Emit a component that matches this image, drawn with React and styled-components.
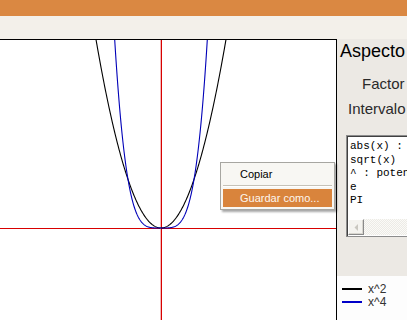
import React from 'react';
import styled, { createGlobalStyle } from 'styled-components';

const Global = createGlobalStyle`
  html, body { margin: 0; padding: 0; background: #fff; }
  body { font-family: "Liberation Sans", Arial, sans-serif; overflow: hidden; }
`;

const Window = styled.div`
  width: 407px;
  height: 320px;
  display: flex;
  flex-direction: column;
  overflow: hidden;
  position: relative;
`;
const TitleBar = styled.div`
  height: 16px;
  flex: none;
  background: #da8842;
`;
const Toolbar = styled.div`
  height: 23px;
  flex: none;
  background: #f3f0ea;
`;
const Main = styled.div`
  flex: 1;
  display: flex;
  min-height: 0;
`;
const PlotArea = styled.div`
  width: 336px;
  flex: none;
  border-top: 1px solid #000;
  border-right: 1px solid #000;
  background: #fff;
  svg { display: block; }
`;
const Side = styled.div`
  flex: 1;
  min-width: 0;
  display: flex;
  flex-direction: column;
  background: #ece9e4;
  overflow: hidden;
  white-space: nowrap;
`;
const Heading = styled.div`
  font-size: 18px;
  line-height: 22px;
  margin-top: 1px;
  padding-left: 3px;
  color: #000;
`;
const Label = styled.div`
  font-size: 15px;
  line-height: 18px;
  color: #2a2a2a;
  margin-top: ${p => p.$top}px;
  padding-left: ${p => p.$left}px;
`;
const TextBox = styled.div`
  margin-top: 17px;
  margin-left: 9px;
  width: 90px;
  height: 102px;
  flex: none;
  box-sizing: border-box;
  border: 1px solid #8c8c8c;
  box-shadow: inset 1px 1px 0 #404040;
  background: #fff;
  display: flex;
  flex-direction: column;
  overflow: hidden;
`;
const Code = styled.div`
  flex: 1;
  padding: 4px 0 0 3px;
  font-family: "Liberation Mono", "Courier New", monospace;
  font-size: 11px;
  line-height: 13.5px;
  color: #000;
`;
const HScroll = styled.div`
  height: 16px;
  margin: 0 0 1px 1px;
  display: flex;
  background-color: #f3f2ee;
  background-image: repeating-conic-gradient(#fbfaf7 0 25%, #ecebe6 0 50%);
  background-size: 2px 2px;
`;
const ArrowBtn = styled.div`
  width: 16px;
  height: 16px;
  box-sizing: border-box;
  background: #f4f3ef;
  border: 1px solid;
  border-color: #fff #8a8a8a #8a8a8a #fff;
  box-shadow: inset -1px -1px 0 #d8d6cf;
  display: flex;
  align-items: center;
  justify-content: center;
`;
const Legend = styled.div`
  flex: 1;
  margin-top: 39px;
  background: #fdfdfd;
  padding: 6px 0 0 5px;
  display: flex;
  flex-direction: column;
`;
const LegendRow = styled.div`
  height: 13px;
  display: flex;
  align-items: center;
  gap: 6px;
  font-size: 12px;
  color: #333;
`;
const Swatch = styled.span`
  width: 20px;
  height: 2px;
  background: ${p => p.$color};
`;
const Menu = styled.div`
  position: absolute;
  left: 220px;
  top: 162px;
  width: 115px;
  box-sizing: border-box;
  padding: 2px;
  background: #f8f7f3;
  border: 1px solid #a7a6a1;
  box-shadow: 2px 2px 2px rgba(0, 0, 0, 0.35);
  font-size: 11px;
`;
const MenuItem = styled.div`
  height: 18px;
  line-height: 18px;
  padding-left: 17px;
  color: ${p => (p.$active ? '#fdf6ee' : '#000')};
  background: ${p => (p.$active ? '#d9843c' : 'transparent')};
`;
const Separator = styled.div`
  height: 1px;
  margin: 2px 0;
  background: #c5c2b8;
  border-bottom: 1px solid #fff;
`;

const W = 336;
const H = 280;
const CX = 161;
const CY = 188;
const UX = 33;
const UY = 48.6;

function curve(n) {
  const pts = [];
  for (let px = 60; px <= 262; px += 0.5) {
    const x = (px - CX) / UX;
    const y = CY - UY * Math.pow(x, n);
    if (y < -5) continue;
    pts.push(`${px.toFixed(2)},${y.toFixed(2)}`);
  }
  return 'M' + pts.join(' L');
}

function Plot() {
  return (
    <svg width={W} height={H} viewBox={`0 0 ${W} ${H}`}>
      <rect x="0" y={CY} width={W} height="1" fill="#d80000" />
      <rect x={CX - 1} y="0" width="1" height={H} fill="#f2b8b8" />
      <rect x={CX} y="0" width="1" height={H} fill="#d80000" />
      <path d={curve(2)} fill="none" stroke="#000" strokeWidth="1.1" />
      <path d={curve(4)} fill="none" stroke="#0000b8" strokeWidth="1.1" />
    </svg>
  );
}

export default function App() {
  return (
    <Window>
      <Global />
      <TitleBar />
      <Toolbar />
      <Main>
        <PlotArea>
          <Plot />
        </PlotArea>
        <Side>
          <Heading>Aspecto</Heading>
          <Label $top={13} $left={25}>Factor</Label>
          <Label $top={7} $left={11}>Intervalo</Label>
          <TextBox>
            <Code>
              <div>abs(x) : valor</div>
              <div>sqrt(x)</div>
              <div>^ : potencia</div>
              <div>e</div>
              <div>PI</div>
            </Code>
            <HScroll>
              <ArrowBtn>
                <svg width="4" height="7" viewBox="0 0 4 7">
                  <path d="M4 0 L0.5 3.5 L4 7 Z" fill="#c9c7c0" />
                </svg>
              </ArrowBtn>
            </HScroll>
          </TextBox>
          <Legend>
            <LegendRow><Swatch $color="#000" />x^2</LegendRow>
            <LegendRow><Swatch $color="#0000c8" />x^4</LegendRow>
          </Legend>
        </Side>
      </Main>
      <Menu>
        <MenuItem>Copiar</MenuItem>
        <Separator />
        <MenuItem $active>Guardar como...</MenuItem>
      </Menu>
    </Window>
  );
}
